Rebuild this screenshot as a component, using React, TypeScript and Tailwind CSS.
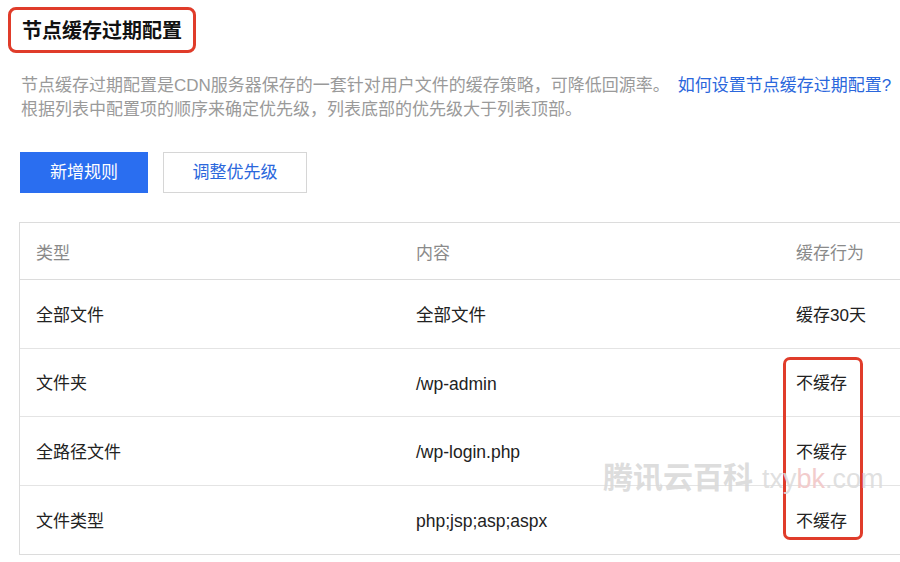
import React from "react";

type Row = { type: string; content: string; action: string };

const rows: Row[] = [
  { type: "全部文件", content: "全部文件", action: "缓存30天" },
  { type: "文件夹", content: "/wp-admin", action: "不缓存" },
  { type: "全路径文件", content: "/wp-login.php", action: "不缓存" },
  { type: "文件类型", content: "php;jsp;asp;aspx", action: "不缓存" },
];

export default function App() {
  return (
    <div className="relative w-[900px] h-[562px] overflow-hidden bg-white font-['Liberation_Sans','Noto_Sans_CJK_SC',sans-serif] text-[#222]">
      {/* 标题 */}
      <div className="ml-[8px] mt-[7px] inline-flex h-[46px] items-center rounded-[8px] border-[3px] border-[#e03c2a] px-[11px]">
        <h1 className="pt-[1px] text-[20px] font-bold leading-none text-[#111]">节点缓存过期配置</h1>
      </div>

      {/* 说明 */}
      <div className="mt-[21px] px-[21px] text-[17px] leading-[24px] text-[#9a9a9a] whitespace-nowrap">
        <p>
          节点缓存过期配置是CDN服务器保存的一套针对用户文件的缓存策略，可降低回源率。
          <a className="ml-[8px] text-[#2b67dc]">如何设置节点缓存过期配置?</a>
        </p>
        <p>根据列表中配置项的顺序来确定优先级，列表底部的优先级大于列表顶部。</p>
      </div>

      {/* 操作按钮 */}
      <div className="mt-[30px] ml-[20px] flex gap-[15px]">
        <button className="h-[41px] w-[128px] bg-[#2a6ef0] pt-[1px] text-[17px] text-white">新增规则</button>
        <button className="h-[41px] w-[144px] border border-[#d6d6d6] bg-white pt-[1px] text-[17px] text-[#2b67dc]">调整优先级</button>
      </div>

      {/* 表格 */}
      <div className="mt-[29px] ml-[19px] w-[920px] border border-[#dcdcdc]">
        <div className="grid h-[57px] grid-cols-[380px_380px_1fr] items-center border-b border-[#dcdcdc] pt-[5px] text-[17px] text-[#8a8a8a]">
          <div className="pl-[16px]">类型</div>
          <div className="pl-[16px]">内容</div>
          <div className="pl-[16px]">缓存行为</div>
        </div>
        {rows.map((r, i) => (
          <div
            key={i}
            className={`grid h-[68.5px] grid-cols-[380px_380px_1fr] items-center pt-[3px] text-[17px] ${i < rows.length - 1 ? "border-b border-[#e4e4e4]" : ""}`}
          >
            <div className="pl-[16px]">{r.type}</div>
            <div className="pl-[16px] text-[17.5px]">{r.content}</div>
            <div className="pl-[16px]">{r.action}</div>
          </div>
        ))}
      </div>

      {/* 红框标注 */}
      <div className="absolute left-[783px] top-[357px] h-[183px] w-[80px] rounded-[7px] border-[3px] border-[#e03c2a]" />

      {/* 水印 */}
      <div className="pointer-events-none absolute left-[603px] top-[463px] flex items-baseline whitespace-nowrap leading-none">
        <span className="text-[30px] font-bold text-[#d9d9d9]/90">腾讯云百科</span>
        <span className="ml-[9px] text-[27px] text-[#dcdcdc]/90">
          txy<span className="text-[#f2cccc]">bk</span>.com
        </span>
      </div>
    </div>
  );
}
